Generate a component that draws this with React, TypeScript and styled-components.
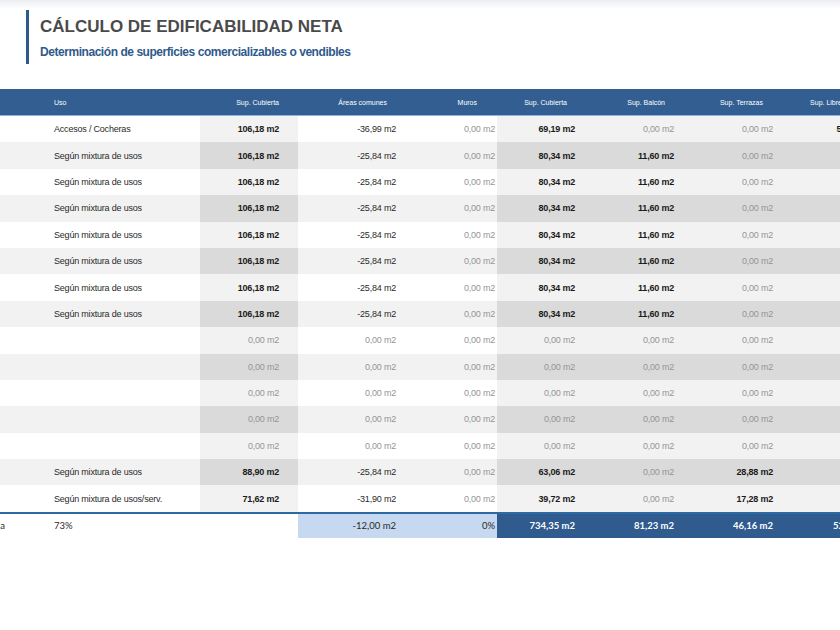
import React, { FC } from 'react'
import styled, { createGlobalStyle } from 'styled-components'

const COLS = '45px 155px 98px 99px 100px 100px 100px 100px 100px'
const HIGHLIGHT = [2, 5, 6, 7, 8]
const VALUE_PAD = [0, 9, 19, 1, 2, 22, 23, 24, 24]
const HEAD_PAD = [0, 9, 19, 10, 20, 30, 32, 34, 55]

type Kind = 'bold' | 'plain' | 'muted'
type Value = [string, Kind]

const Z: Value = ['0,00 m2', 'muted']

const HEADERS = [
  '',
  'Uso',
  'Sup. Cubierta',
  'Áreas comunes',
  'Muros',
  'Sup. Cubierta',
  'Sup. Balcón',
  'Sup. Terrazas',
  'Sup. Libre',
]

const mixed = (): Value[] => [
  ['106,18 m2', 'bold'],
  ['-25,84 m2', 'plain'],
  Z,
  ['80,34 m2', 'bold'],
  ['11,60 m2', 'bold'],
  Z,
  Z,
]

const ROWS: { uso: string; values: Value[] }[] = [
  {
    uso: 'Accesos / Cocheras',
    values: [
      ['106,18 m2', 'bold'],
      ['-36,99 m2', 'plain'],
      Z,
      ['69,19 m2', 'bold'],
      Z,
      Z,
      ['52,40 m2', 'bold'],
    ],
  },
  ...Array.from({ length: 7 }, () => ({ uso: 'Según mixtura de usos', values: mixed() })),
  ...Array.from({ length: 5 }, () => ({ uso: '', values: [Z, Z, Z, Z, Z, Z, Z] })),
  {
    uso: 'Según mixtura de usos',
    values: [
      ['88,90 m2', 'bold'],
      ['-25,84 m2', 'plain'],
      Z,
      ['63,06 m2', 'bold'],
      Z,
      ['28,88 m2', 'bold'],
      Z,
    ],
  },
  {
    uso: 'Según mixtura de usos/serv.',
    values: [
      ['71,62 m2', 'bold'],
      ['-31,90 m2', 'plain'],
      Z,
      ['39,72 m2', 'bold'],
      Z,
      ['17,28 m2', 'bold'],
      Z,
    ],
  },
]

const cellBg = (row: number, col: number) => {
  const striped = row % 2 === 1
  const hi = HIGHLIGHT.includes(col)
  if (striped) return hi ? '#dadada' : '#f2f2f2'
  return hi ? '#f2f2f2' : '#ffffff'
}

export default function App() {
  return (
    <>
      <GlobalStyle />
      <Page>
        <TitleBlock>
          <Title>CÁLCULO DE EDIFICABILIDAD NETA</Title>
          <Subtitle>Determinación de superficies comercializables o vendibles</Subtitle>
        </TitleBlock>

        <Table>
          <HeadRow>
            {HEADERS.map((h, i) => (
              <HeadCell key={i} $pad={HEAD_PAD[i]} $left={i < 2}>
                {h}
              </HeadCell>
            ))}
          </HeadRow>

          {ROWS.map((r, ri) => (
            <BodyRow key={ri}>
              <Cell $bg={cellBg(ri, 0)} $pad={0} $left />
              <Cell $bg={cellBg(ri, 1)} $pad={VALUE_PAD[1]} $left>
                <Text $kind="plain">{r.uso}</Text>
              </Cell>
              {r.values.map(([v, kind], vi) => (
                <Cell key={vi} $bg={cellBg(ri, vi + 2)} $pad={VALUE_PAD[vi + 2]}>
                  <Text $kind={kind}>{v}</Text>
                </Cell>
              ))}
            </BodyRow>
          ))}

          <TotalRow>
            <TotalCell $tone="white" $pad={40}>
              Eficiencia
            </TotalCell>
            <TotalCell $tone="white" $pad={9} $left>
              73%
            </TotalCell>
            <TotalCell $tone="white" $pad={0} />
            <TotalCell $tone="light" $pad={1}>
              -12,00 m2
            </TotalCell>
            <TotalCell $tone="light" $pad={2}>
              0%
            </TotalCell>
            <TotalCell $tone="dark" $pad={22}>
              734,35 m2
            </TotalCell>
            <TotalCell $tone="dark" $pad={23}>
              81,23 m2
            </TotalCell>
            <TotalCell $tone="dark" $pad={24}>
              46,16 m2
            </TotalCell>
            <TotalCell $tone="dark" $pad={24}>
              52,40 m2
            </TotalCell>
          </TotalRow>
        </Table>
      </Page>
    </>
  )
}

const GlobalStyle = createGlobalStyle`
  html, body {
    margin: 0;
    padding: 0;
    overflow: hidden;
  }
  body {
    font-family: 'Liberation Sans', Arial, sans-serif;
    background: linear-gradient(#eceef1 0, #ffffff 9px);
    width: 840px;
    height: 630px;
  }
`

const Page = styled.div`
  width: 840px;
  height: 630px;
  padding-top: 10px;
  box-sizing: border-box;
  overflow: hidden;
`

const TitleBlock = styled.div`
  margin-left: 26px;
  border-left: 3px solid #2f5a8c;
  padding: 7px 0 4px 11px;
  display: flex;
  flex-direction: column;
  gap: 8px;
`

const Title = styled.h1`
  margin: 0;
  font-size: 17px;
  line-height: 20px;
  font-weight: 700;
  color: #4a4a4a;
`

const Subtitle = styled.h2`
  margin: 0;
  font-size: 12px;
  line-height: 15px;
  font-weight: 700;
  color: #2f5a8c;
  letter-spacing: -0.45px;
`

const Table = styled.div`
  margin-top: 25px;
  width: 897px;
  display: flex;
  flex-direction: column;
`

const HeadRow = styled.div`
  display: grid;
  grid-template-columns: ${COLS};
  height: 26px;
  background: #335e91;
  border-bottom: 1px solid #8db2dd;
`

const HeadCell = styled.div<{ $pad: number; $left?: boolean }>`
  display: flex;
  align-items: center;
  justify-content: ${({ $left }) => ($left ? 'flex-start' : 'flex-end')};
  padding: ${({ $pad, $left }) => ($left ? `0 0 0 ${$pad}px` : `0 ${$pad}px 0 0`)};
  font-size: 7px;
  color: #ffffff;
  white-space: nowrap;
`

const BodyRow = styled.div`
  display: grid;
  grid-template-columns: ${COLS};
  height: 26.4px;
`

const Cell = styled.div<{ $bg: string; $pad: number; $left?: boolean }>`
  display: flex;
  align-items: center;
  justify-content: ${({ $left }) => ($left ? 'flex-start' : 'flex-end')};
  padding: ${({ $pad, $left }) => ($left ? `0 0 0 ${$pad}px` : `0 ${$pad}px 0 0`)};
  background: ${({ $bg }) => $bg};
  white-space: nowrap;
`

const Text = styled.span<{ $kind: Kind }>`
  font-size: 9px;
  letter-spacing: -0.2px;
  font-weight: ${({ $kind }) => ($kind === 'bold' ? 700 : 400)};
  color: ${({ $kind }) => ($kind === 'bold' ? '#1a1a1a' : $kind === 'muted' ? '#959595' : '#2a2a2a')};
`

const TOTAL_TONES = {
  white: { bg: '#ffffff', fg: '#2a2a2a', weight: 400 },
  light: { bg: '#c6d9f0', fg: '#2a2a2a', weight: 400 },
  dark: { bg: '#2f5b8e', fg: '#ffffff', weight: 700 },
}

const TotalRow = styled.div`
  display: grid;
  grid-template-columns: ${COLS};
  height: 24px;
  border-top: 2px solid #2c6aa3;
`

const TotalCell = styled.div<{ $tone: keyof typeof TOTAL_TONES; $pad: number; $left?: boolean }>`
  display: flex;
  align-items: center;
  justify-content: ${({ $left }) => ($left ? 'flex-start' : 'flex-end')};
  padding: ${({ $pad, $left }) => ($left ? `0 0 0 ${$pad}px` : `0 ${$pad}px 0 0`)};
  background: ${({ $tone }) => TOTAL_TONES[$tone].bg};
  color: ${({ $tone }) => TOTAL_TONES[$tone].fg};
  font-weight: ${({ $tone }) => TOTAL_TONES[$tone].weight};
  font-family: Lato, 'Liberation Sans', sans-serif;
  font-size: 9.5px;
  white-space: nowrap;
`
